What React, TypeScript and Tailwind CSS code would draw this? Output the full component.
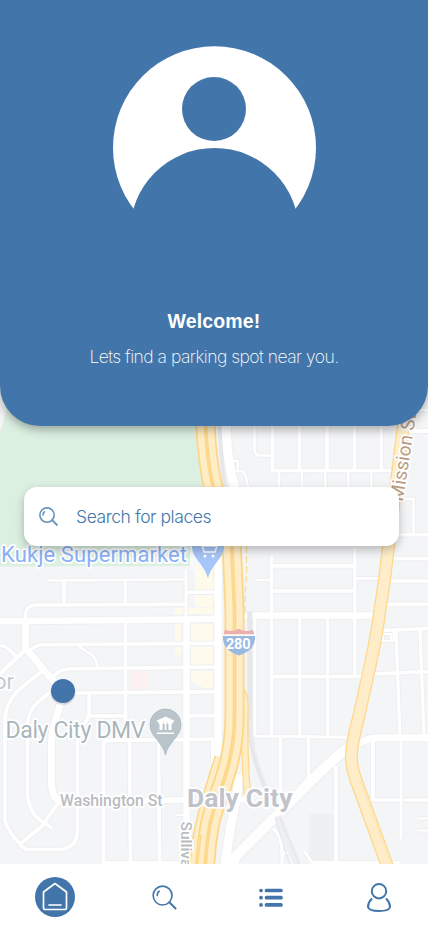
import React from "react";

type Road = { d: string; w: number };

const roads: Road[] = [
  // west side
  { d: "M48 580.6L185 579.6", w: 2.5 },
  { d: "M64 581V604", w: 3.5 },
  { d: "M125.5 580V604", w: 3.5 },
  { d: "M25.5 621V614Q26.500 605 36 605L187 604.3", w: 3.5 },
  { d: "M0 621.3L186 619.4L222 618.400", w: 6.5 },
  { d: "M25.500 621V648L55 683", w: 7 },
  { d: "M63 690C60 714 51.500 722 51.500 742V783Q51.500 797 60 802", w: 7 },
  { d: "M0 645.500Q8 646 16 657", w: 3.5 },
  { d: "M0 674L26 649", w: 4 },
  { d: "M30 650Q36 644.800 44 644.800L218 643.300", w: 3.5 },
  { d: "M79 646Q82 649 92 655Q97 659 97 667", w: 2.5 },
  { d: "M53 677Q60 669 71 668.800L218 667", w: 3.5 },
  { d: "M43 670L20 689Q5 702 5 722V818Q5 828 20 844Q24 850 30 849.500H62Q77 847 77.500 830V744C77 730 86 724 89 715.800", w: 3.7 },
  { d: "M50 692L37 703Q27.500 712 27.500 726V796Q29 812 41 821L52 828", w: 3.7 },
  { d: "M20 844L42 826L58 803", w: 3.7 },
  { d: "M72 693L218 691.800", w: 3.5 },
  { d: "M89 693V716H126", w: 3.5 },
  { d: "M125.500 621V740", w: 3.7 },
  { d: "M186 570V622", w: 3 },
  { d: "M186.500 618V866", w: 6.5 },
  { d: "M187 592.300H218", w: 3.5 },
  { d: "M188 715.600H218", w: 3.5 },
  { d: "M103.500 866V744Q103.500 740.500 107 740.500L218 739.200", w: 3.7 },
  { d: "M129.500 741L130.500 866", w: 3.7 },
  { d: "M158.500 741L159.500 866", w: 3.7 },
  { d: "M58 802L184 800", w: 6 },
  { d: "M175 815H184", w: 2 },
  { d: "M104 862.500H178", w: 3 },
  { d: "M212.500 740V763", w: 3 },
  { d: "M218 540V757", w: 7.5 },
  // north grid
  { d: "M226 400C226 448 228 465 236 492", w: 9 },
  { d: "M254.500 420V450Q255 455.500 260 455.500H272", w: 2.5 },
  { d: "M272.500 415V470.500H394", w: 3.7 },
  { d: "M299.500 415V470", w: 3.7 },
  { d: "M327 415V470", w: 3.7 },
  { d: "M354.500 415V470", w: 3.7 },
  { d: "M381.300 415V470", w: 3.7 },
  { d: "M279 471V490", w: 2.5 },
  { d: "M302 471V490", w: 2.5 },
  { d: "M325.300 471V490", w: 2.5 },
  { d: "M348.300 471V490", w: 2.5 },
  { d: "M371.300 471V490", w: 2.5 },
  { d: "M230 461H238V470M230 471H241Q246 471 247 482L249 489", w: 2.2 },
  { d: "M402 410H428", w: 2.5 },
  { d: "M402 431H428", w: 4 },
  { d: "M398 499H413.500V534", w: 2.5 },
  { d: "M392 534.800H428", w: 3.5 },
  // east grid
  { d: "M390 558.500H428", w: 3.7 },
  { d: "M271.500 556V738", w: 3.5 },
  { d: "M354.700 548V676", w: 3.5 },
  { d: "M271 565.800H355", w: 3.7 },
  { d: "M257 579.800H271", w: 2 },
  { d: "M355 578.500H380", w: 3 },
  { d: "M386 581H428", w: 3.5 },
  { d: "M271 591H355", w: 3.5 },
  { d: "M384 604.200H428", w: 3.5 },
  { d: "M242 616.500L252 615.500H378", w: 6.5 },
  { d: "M380 630.500L428 628.500", w: 3.5 },
  { d: "M380 641H393.500V631M383 640V634H391V640", w: 2.2 },
  { d: "M396 631L400 736", w: 3.2 },
  { d: "M420 630L424 736", w: 3.2 },
  { d: "M271 676.500H366", w: 3.5 },
  { d: "M374 674L428 671.500", w: 3.5 },
  { d: "M299.800 618V737", w: 3.2 },
  { d: "M327.600 618V737", w: 3.2 },
  { d: "M254.800 619V736L350 737.300", w: 3 },
  { d: "M358 744Q366 738.200 378 737.700H428", w: 7 },
  { d: "M280.500 738V803", w: 3.5 },
  { d: "M308.500 738V782", w: 3.5 },
  { d: "M336 766V866", w: 3.7 },
  { d: "M350 746Q333 759 312 780L236 856L232 866", w: 10 },
  { d: "M373 741V800", w: 4.2 },
  { d: "M368 800H428", w: 3.2 },
  { d: "M401 741V839", w: 3 },
  { d: "M418 818.500H428M418 830.500H428", w: 2 },
  { d: "M239 775C237 805 230 820 225 866", w: 9 },
  { d: "M236 799.500H252", w: 6 },
  { d: "M273 828Q282 836 282 852V866M282 853H288", w: 3 },
  { d: "M304 851L312 862.500H400", w: 3 },
];

const freeway =
  "M204 380C205 430 207 464 214 490C221 514 231 526 232 552L234.500 610V715C234.500 768 217 792 210 824Q206 845 205 868";
const mission =
  "M409 380L388.500 546Q385 580 379.500 613C375 650 366 682 359 716C350 750 349 762 356 780L388 868";
const westRamp = "M219 757C211 782 203 806 197 836L193 868";
const eastRamp = "M241 690Q245 695 245 707Q244 760 247.500 794";

const roboto = "font-[Roboto,sans-serif]";

function CityMap() {
  return (
    <svg className="absolute inset-x-0 top-[380px] h-[484px] w-[428px]" viewBox="0 380 428 484" strokeLinejoin="round">
      <rect y="380" width="428" height="484" fill="#f4f5f7" />
      <path d="M16 380L7 408L0 432V566.500L190 566L223 546L204 480L196 380Z" fill="#dcf0e2" />
      <path d="M190 546H226V570H190Z" fill="#f8f9fa" />
      <path
        d="M195 566H218V607H195ZM175 608H218V614H175ZM175 624H181V641H175ZM175 647H181V655H175ZM191 624H218V642H191ZM191 647H218V665H191ZM191 671H218V688H204L191 681Z"
        fill="#fefbec"
      />
      <rect x="129" y="671" width="18" height="18" fill="#fcf0f1" />
      <rect x="309" y="814" width="25" height="46" rx="2" fill="#eff0f2" />
      <g fill="none" stroke="#edeef0">
        {roads.map((r, i) => (
          <path key={i} d={r.d} strokeWidth={r.w + 1.8} />
        ))}
      </g>
      <g fill="none" stroke="#fff">
        {roads.map((r, i) => (
          <path key={i} d={r.d} strokeWidth={r.w} />
        ))}
      </g>
      {/* railway */}
      <g fill="none" stroke="#e6e7ea">
        <path d="M219 380C219 440 221 465 226 492" strokeWidth="4" />
        <path d="M249.800 612V720C250 752 260 774 268 794" strokeWidth="5" />
        <path d="M278 816L299 868" stroke="#eeeff1" strokeWidth="7" />
        <path d="M249.800 720C252 752 262 774 270 794" stroke="#f1f2f4" strokeWidth="1" />
        <path d="M275 818L291 868M280 818L301 868" strokeWidth="1.200" />
      </g>
      {/* highways */}
      <g fill="none">
        <path d={westRamp} stroke="#fdd687" strokeWidth="9" />
        <path d={westRamp} stroke="#feedc6" strokeWidth="6" />
        <path d={eastRamp} stroke="#fdd98e" strokeWidth="7.500" />
        <path d={eastRamp} stroke="#feedc6" strokeWidth="5" />
        <path d="M246.500 546V575Q245 590 245 612" stroke="#fde0a0" strokeWidth="1.500" strokeDasharray="7 3" />
        <path d={freeway} stroke="#fdd687" strokeWidth="20" />
        <path d={freeway} stroke="#feedc6" strokeWidth="16.500" />
        <path d={freeway} stroke="#fdd687" strokeWidth="3.600" />
        <path d={freeway} stroke="#fddc98" strokeWidth="1" />
        <path d="M201 835L197 868" stroke="#fdd687" strokeWidth="1.500" />
        <path d={mission} stroke="#fdd88a" strokeWidth="13" />
        <path d={mission} stroke="#feedc8" strokeWidth="10.500" />
        <path d="M359 778L392 868" stroke="#fde3ab" strokeWidth="0.700" />
      </g>
      {/* route shield */}
      <path d="M223.500 634.500L225 629.500Q228 631.500 231 631Q236 630.500 238.700 628.800Q242 630.500 246 631Q250 631.500 252.500 629.500L254.500 634.500Z" fill="#ecaeae" />
      <path d="M223 636H255Q256 650 239 655.500Q222 650 223 636Z" fill="#9ab9e2" />
      <path d="M223 635H255" stroke="#fff" strokeWidth="1.300" />
      <text x="226" y="648.700" fontSize="14.500" fontWeight="700" fill="#fff" textLength="24.500" className={roboto}>280</text>
      {/* pins */}
      <path d="M192 546A16 16 0 0 1 224 546C224 559 212 563 208 578.500C204 563 192 559 192 546Z" fill="#a6c5f8" />
      <path d="M198 543L202 545L204 552H215L217 546H203" fill="none" stroke="#fff" strokeWidth="1.500" />
      <circle cx="205" cy="556" r="1.500" fill="#fff" />
      <circle cx="213" cy="556" r="1.500" fill="#fff" />
      <path d="M150 724.500A15.500 15.500 0 0 1 181 724.500C181 737 168 742 165.500 755C163 742 150 737 150 724.500Z" fill="#bac5cb" stroke="#a9b6bd" strokeWidth="0.800" />
      <path d="M157 722V720.500L165.500 716.500L174 720.500V722ZM158.500 722H163.500V724H162.500V730H159.500V724H158.500ZM167.500 722H172.500V724H171.500V730H168.500V724H167.500ZM164 722H167V724H166.300V730H164.700V724H164ZM157 732.500H174V734H157Z" fill="#fff" />
      {/* labels */}
      <g className={roboto} stroke="#fff" strokeWidth="3.500" paintOrder="stroke">
        <text x="1" y="561.700" fontSize="22" fill="#8ab1f6" textLength="186">Kukje Supermarket</text>
        <text x="5.500" y="738" fontSize="23" fill="#a9b7bd" textLength="140">Daly City DMV</text>
        <text x="60" y="806.300" fontSize="16" fontWeight="500" fill="#b9bcbf" textLength="102.500" lengthAdjust="spacingAndGlyphs">Washington St</text>
        <text x="187" y="806.500" fontSize="26.500" fontWeight="700" fill="#c0c3ca" textLength="105.500">Daly City</text>
        <text x="-6" y="689" fontSize="22" fill="#c5c8cb">or</text>
        <text transform="translate(181 821.500) rotate(90)" fontSize="15.500" fontWeight="500" fill="#b9bcbf">Sullivan Ave</text>
        <text transform="translate(402.800 502) rotate(-81.300)" fontSize="19" fill="#bc9d84">Mission St</text>
      </g>
      {/* current position */}
      <circle cx="63" cy="693" r="12.500" fill="#000" opacity="0.060" />
      <circle cx="63" cy="692" r="12.500" fill="#000" opacity="0.080" />
      <circle cx="63" cy="691" r="12" fill="#4276aa" />
    </svg>
  );
}

function SearchGlyph({ className, strokeWidth }: { className: string; strokeWidth: number }) {
  return (
    <svg viewBox="0 0 26 26" className={className} fill="none" stroke="#4276aa" strokeWidth={strokeWidth} strokeLinecap="round">
      <circle cx="11" cy="11" r="9.800" />
      <path d="M18 18L24.500 24.500" strokeWidth={strokeWidth * 1.200} />
      <path d="M5.500 11Q5.500 7.500 7.500 6.500" />
    </svg>
  );
}

export default function App() {
  return (
    <div className="relative flex h-[926px] w-[428px] flex-col overflow-hidden bg-white">
      <CityMap />
      <header className="relative flex h-[426px] flex-col items-center rounded-b-[40px] bg-[#4276aa] pt-[46px] text-white shadow-[0_4px_10px_rgba(0,0,0,0.3)]">
        <svg viewBox="0 0 203 203" className="ml-px h-[203px] w-[203px]">
          <circle cx="101.500" cy="101.700" r="101.500" fill="#fff" />
          <circle cx="101" cy="63" r="32" fill="#4276aa" />
          <circle cx="101.500" cy="186.500" r="84.500" fill="#4276aa" />
        </svg>
        <h1 className="mt-[60px] font-['Liberation_Sans',sans-serif] text-[19.500px] leading-[24px] font-bold tracking-[0.150px]">Welcome!</h1>
        <p className="mt-[12px] font-[Inter,sans-serif] text-[17.500px] leading-[24px] font-extralight tracking-[-0.510px] whitespace-nowrap">
          Lets find a parking spot near you.
        </p>
      </header>
      <main className="relative flex-1 pt-[61px] pl-6">
        <label className="flex h-[59px] w-[375px] items-center rounded-[13px] bg-white pl-[15px] shadow-[0_4px_10px_rgba(0,0,0,0.25)]">
          <SearchGlyph className="h-[19px] w-[19px] opacity-80" strokeWidth={2.2} />
          <span className="ml-[18px] font-[Inter,sans-serif] text-[17.500px] leading-6 font-light tracking-[-0.430px] text-[#4276aa]">
            Search for places
          </span>
        </label>
      </main>
      <nav className="relative flex h-[62px] items-center bg-white pt-1 pl-[35px]">
        <svg viewBox="0 0 40 40" className="h-10 w-10" fill="none" stroke="#fff" strokeWidth="1.700" strokeLinejoin="round" strokeLinecap="round">
          <circle cx="20" cy="20" r="20" fill="#4276aa" stroke="none" />
          <path d="M20 6.500L31.500 15V31Q31.500 32.500 30 32.500H10Q8.500 32.500 8.500 31V15Z" />
          <path d="M14 28H26" />
        </svg>
        <SearchGlyph className="ml-[77px] h-[25px] w-[25px]" strokeWidth={1.700} />
        <svg viewBox="0 0 24 20" className="ml-[82px] h-5 w-6" fill="none" stroke="#4276aa" strokeWidth="3.700" strokeLinecap="round">
          <path d="M2 3.500H2.100M2 10.700H2.100M2 17.900H2.100M7.500 3.500H22M7.500 10.700H22M7.500 17.900H22" />
        </svg>
        <svg viewBox="0 0 26 30" className="ml-[83px] h-[30px] w-[26px]" fill="none" stroke="#4276aa" strokeWidth="2" strokeLinecap="round">
          <circle cx="13" cy="9.200" r="7.200" />
          <path d="M5.500 17Q2 20.500 2 25Q3 29 13 29Q23.500 29 24 25Q24 20.500 20.500 17" />
        </svg>
      </nav>
    </div>
  );
}
